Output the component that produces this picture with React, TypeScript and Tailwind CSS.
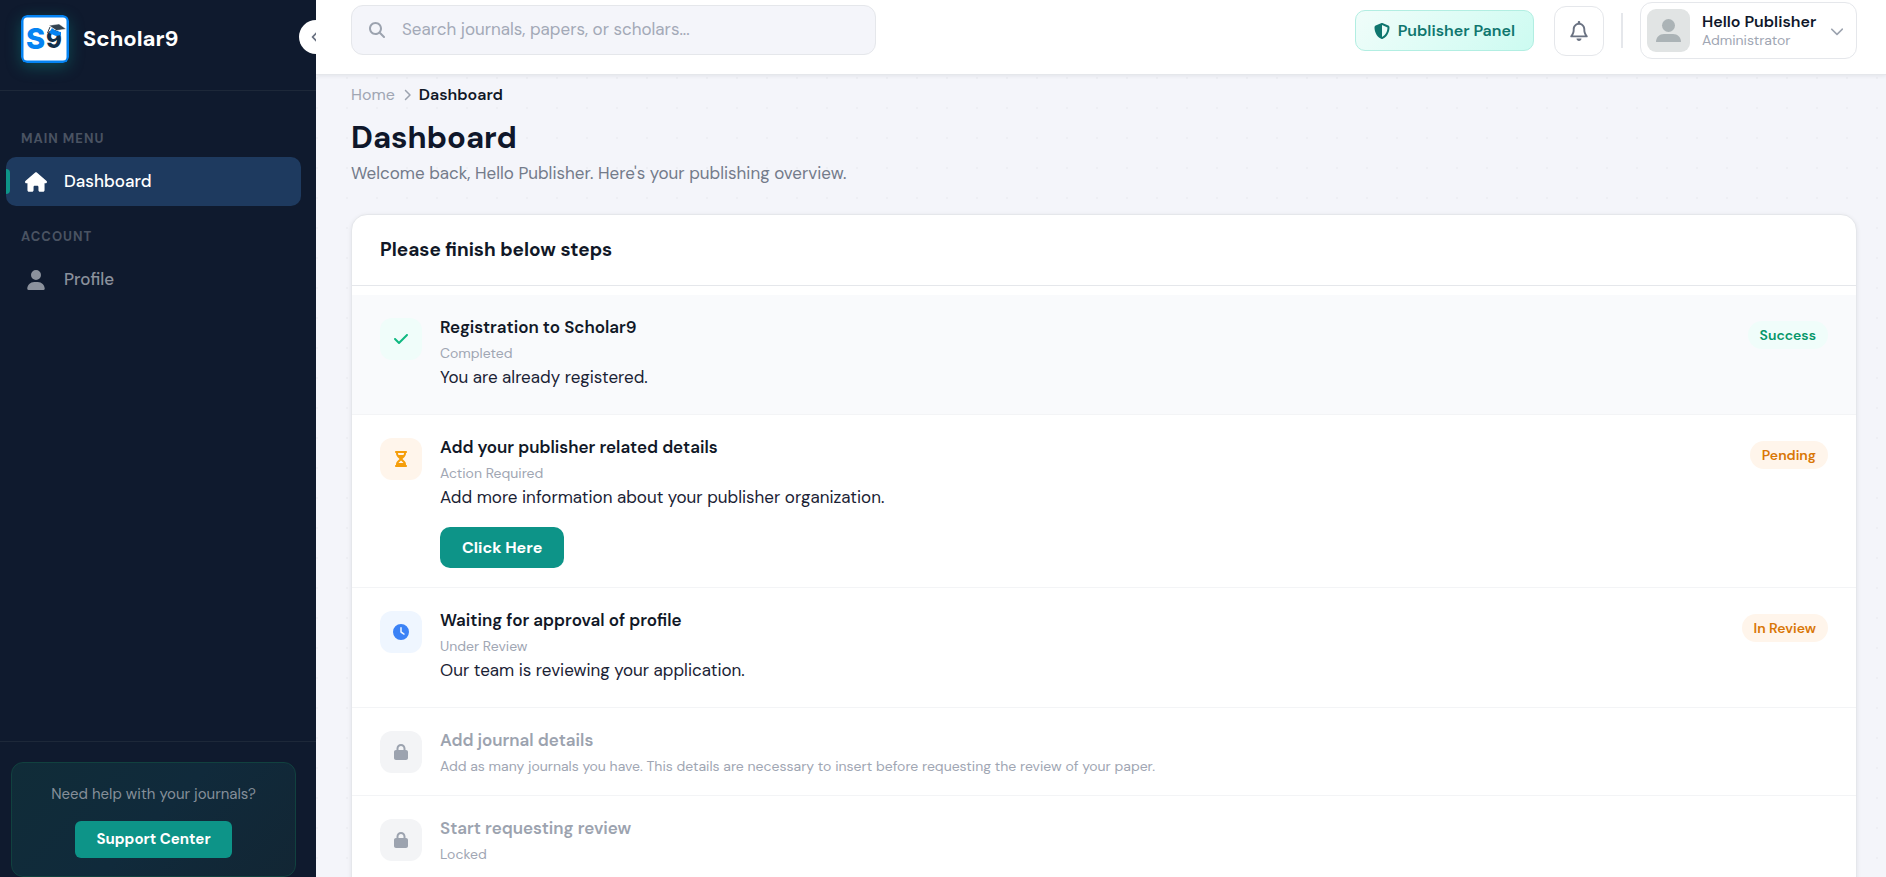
import type { ComponentType, ReactNode } from 'react';
import {
  FaCheck,
  FaChevronDown,
  FaChevronLeft,
  FaChevronRight,
  FaClock,
  FaHourglassHalf,
  FaHouse,
  FaLock,
  FaMagnifyingGlass,
  FaRegBell,
  FaShieldHalved,
  FaUser,
} from 'react-icons/fa6';

type IconType = ComponentType<{ className?: string }>;

function Logo() {
  return (
    <svg
      className="w-12 h-12 shrink-0 rounded-md shadow-[0_4px_15px_rgba(13,148,136,0.4)]"
      viewBox="0 0 48 48"
      aria-hidden="true"
    >
      <rect width="48" height="48" rx="6" fill="#0583f2" />
      <rect x="2.5" y="2.5" width="43" height="43" rx="3.5" fill="#fff" />
      <text
        x="5"
        y="34"
        fontFamily="Inter, sans-serif"
        fontSize="29"
        fontWeight="800"
        fill="#0583f2"
      >
        S
      </text>
      <text
        x="25"
        y="33"
        fontFamily="Inter, sans-serif"
        fontSize="24"
        fontWeight="800"
        fill="#12304a"
      >
        9
      </text>
      <path d="M31 13l4 3 5 1v3l-5 1-7-3z" fill="#0583f2" />
      <path d="M28 10.5l10-1.5 7 5-9.5 1.5z" fill="#33424f" stroke="#fff" strokeWidth=".4" />
      <path d="M29 12l-2.5 6" stroke="#33424f" strokeWidth="1" />
    </svg>
  );
}

function NavLabel({ children }: { children: ReactNode }) {
  return (
    <h2 className="px-[21px] text-[13px] leading-5 font-bold uppercase tracking-[1px] text-[#4a5362]">
      {children}
    </h2>
  );
}

interface NavItemProps {
  icon: IconType;
  label: string;
  active?: boolean;
}

function NavItem({ icon: Icon, label, active = false }: NavItemProps) {
  return (
    <a
      href="#"
      aria-current={active ? 'page' : undefined}
      className={`relative ml-1.5 mr-[15px] h-[49px] px-[18px] flex items-center gap-4 rounded-[10px] overflow-hidden text-[17px] font-medium ${
        active ? 'bg-[#1e3a5f] text-white' : 'text-[#8b919c]'
      }`}
    >
      {active && <span className="absolute left-0 top-3 bottom-3 w-1 rounded-r bg-[#0d9488]" />}
      <span className="w-6 flex justify-center">
        <Icon className={active ? 'size-[22px]' : 'size-5'} />
      </span>
      {label}
    </a>
  );
}

function Sidebar() {
  return (
    <aside className="relative w-[316px] shrink-0 h-screen flex flex-col overflow-hidden bg-[#0f1a2e]">
      <div className="h-[91px] pt-[15px] px-[21px] flex items-start gap-3.5 border-b border-[#1d2839]">
        <Logo />
        <span className="leading-[47px] text-[22px] font-bold text-white">Scholar9</span>
      </div>
      <button
        type="button"
        aria-label="Collapse sidebar"
        className="absolute -right-[17px] top-5 size-[34px] rounded-full bg-white text-gray-500 flex items-center justify-center"
      >
        <FaChevronLeft className="size-3.5" />
      </button>
      <nav className="flex-1 pt-[38px]">
        <NavLabel>Main Menu</NavLabel>
        <div className="mt-2 mb-[21px]">
          <NavItem icon={FaHouse} label="Dashboard" active />
        </div>
        <NavLabel>Account</NavLabel>
        <div className="mt-2">
          <NavItem icon={FaUser} label="Profile" />
        </div>
      </nav>
      <div className="border-t border-[#1d2839] pt-5 pl-[11px] pr-5">
        <div className="rounded-xl border border-[#11413f] bg-linear-135 from-[#102c38] via-[#102a3b] to-[#122634] px-4 pt-[19px] pb-[18px] text-center">
          <p className="text-[15px] leading-6 text-[#858f99]">Need help with your journals?</p>
          <a
            href="#"
            className="mt-[15px] inline-block rounded-md bg-[#0d9488] px-[21px] leading-[37px] text-[15px] font-bold text-white"
          >
            Support Center
          </a>
        </div>
      </div>
    </aside>
  );
}

function Header() {
  return (
    <header className="relative h-[75px] pt-0.5 pl-[35px] pr-[29px] flex items-start justify-between bg-white border-b border-gray-200 shadow-[0_1px_4px_rgba(15,23,42,0.08)]">
      <label className="mt-[3px] w-[525px] h-[50px] px-[17px] flex items-center gap-[17px] rounded-xl border border-gray-200 bg-[#f4f5fa]">
        <span className="sr-only">Search</span>
        <FaMagnifyingGlass className="size-4 shrink-0 text-[#9ca3af]" />
        <input
          type="search"
          placeholder="Search journals, papers, or scholars..."
          className="flex-1 min-w-0 bg-transparent outline-none text-[17px] placeholder:text-[#a3a9b7]"
        />
      </label>
      <div className="h-[57px] flex items-center">
        <button
          type="button"
          className="h-[41px] px-[18px] mr-5 flex items-center gap-2 rounded-[10px] border border-[#b2eee2] bg-linear-135 from-[#f0fdfa] to-[#ccfbf1] text-base font-semibold text-[#0f766e]"
        >
          <FaShieldHalved className="size-4" />
          Publisher Panel
        </button>
        <button
          type="button"
          aria-label="Notifications"
          className="size-[50px] flex items-center justify-center rounded-xl border border-gray-200 text-gray-500"
        >
          <FaRegBell className="size-5" />
        </button>
        <span className="mx-[17px] w-0.5 h-[35px] bg-gray-200" />
        <button
          type="button"
          className="w-[217px] h-[57px] pl-1.5 pr-3 flex items-center gap-3 rounded-xl border border-gray-200 text-left"
        >
          <svg className="size-[43px] shrink-0 rounded-[9px]" viewBox="0 0 43 43" aria-hidden="true">
            <rect width="43" height="43" fill="#e1e4e4" />
            <circle cx="21.5" cy="16.5" r="6.5" fill="#abb3b6" />
            <path d="M9 33c0-5 3.5-8 8-8h9c4.5 0 8 3 8 8z" fill="#abb3b6" />
          </svg>
          <span className="flex-1 pb-0.5">
            <span className="block text-base leading-5 font-semibold text-[#0f172a] whitespace-nowrap">
              Hello Publisher
            </span>
            <span className="block text-sm leading-4 text-[#a0a6b3]">Administrator</span>
          </span>
          <FaChevronDown className="size-3.5 shrink-0 text-[#9ca3af]" />
        </button>
      </div>
    </header>
  );
}

type Tone = 'done' | 'pending' | 'review' | 'locked';

interface Step {
  title: string;
  note: string;
  body?: string;
  badge?: string;
  action?: string;
  tone: Tone;
}

const STEPS: Step[] = [
  {
    title: 'Registration to Scholar9',
    note: 'Completed',
    body: 'You are already registered.',
    badge: 'Success',
    tone: 'done',
  },
  {
    title: 'Add your publisher related details',
    note: 'Action Required',
    body: 'Add more information about your publisher organization.',
    badge: 'Pending',
    action: 'Click Here',
    tone: 'pending',
  },
  {
    title: 'Waiting for approval of profile',
    note: 'Under Review',
    body: 'Our team is reviewing your application.',
    badge: 'In Review',
    tone: 'review',
  },
  {
    title: 'Add journal details',
    note: 'Add as many journals you have. This details are necessary to insert before requesting the review of your paper.',
    tone: 'locked',
  },
  { title: 'Start requesting review', note: 'Locked', tone: 'locked' },
];

const TONES: Record<Tone, { icon: IconType; tile: string; badge: string }> = {
  done: {
    icon: FaCheck,
    tile: 'bg-[#f0fdfa] text-[#10b981]',
    badge: 'bg-[#f0fdfa] text-[#059669]',
  },
  pending: {
    icon: FaHourglassHalf,
    tile: 'bg-[#fff5eb] text-[#f59e0b]',
    badge: 'bg-[#fff5eb] text-[#d97706]',
  },
  review: {
    icon: FaClock,
    tile: 'bg-[#eff6ff] text-[#3b82f6]',
    badge: 'bg-[#fff5eb] text-[#d97706]',
  },
  locked: { icon: FaLock, tile: 'bg-[#f3f4f6] text-[#9ca3af]', badge: '' },
};

function StepRow({ step }: { step: Step }) {
  const { icon: Icon, tile, badge } = TONES[step.tone];
  const locked = step.tone === 'locked';

  return (
    <li
      className={`px-7 pt-5 pb-[19px] flex items-start border-b border-gray-100 ${
        step.tone === 'done' ? 'bg-[#f9fafc]' : ''
      }`}
    >
      <span
        className={`mt-[3px] mr-[18px] size-[42px] shrink-0 rounded-xl flex items-center justify-center ${tile}`}
      >
        <Icon className="size-4" />
      </span>
      <div className="flex-1 min-w-0">
        <h3
          className={`text-[17px] leading-6 font-semibold ${locked ? 'text-[#9ca3af]' : 'text-[#111827]'}`}
        >
          {step.title}
        </h3>
        <p className="mt-1 text-sm leading-5 text-[#a0a6b3]">{step.note}</p>
        {step.body && <p className="mb-1 text-[17px] leading-7 text-[#1a2234]">{step.body}</p>}
        {step.action && (
          <button
            type="button"
            className="mt-4 h-[41px] px-[22px] block rounded-[10px] bg-[#0d9488] text-base font-bold text-white"
          >
            {step.action}
          </button>
        )}
      </div>
      {step.badge && (
        <span className={`mt-1.5 px-3 rounded-full text-sm leading-7 font-semibold ${badge}`}>
          {step.badge}
        </span>
      )}
    </li>
  );
}

export default function App() {
  return (
    <div className="h-screen flex overflow-hidden font-['DM_Sans',Inter,sans-serif] text-[#111827]">
      <Sidebar />
      <div className="flex-1 min-w-0 h-screen overflow-hidden">
        <Header />
        <main className="min-h-screen pt-2 pl-[35px] pr-[29px] bg-[#f4f5fa] bg-[radial-gradient(circle_at_1px_1px,#eeeff4_1px,transparent_0)] bg-size-[30px_30px] bg-position-[0_2px]">
          <nav aria-label="Breadcrumb" className="flex items-center gap-1.5 text-base leading-6">
            <a href="#" className="text-[#a0a6b3]">
              Home
            </a>
            <FaChevronRight className="size-3 text-[#9ca3af]" />
            <span className="font-semibold">Dashboard</span>
          </nav>
          <h1 className="mt-[11px] text-[31px] leading-10 font-bold text-[#0f172a]">Dashboard</h1>
          <p className="mt-[3px] text-[17px] leading-6 text-[#737b8a]">
            Welcome back, Hello Publisher. Here's your publishing overview.
          </p>
          <section className="mt-[29px] rounded-2xl border border-gray-200 bg-white shadow-[0_1px_4px_rgba(15,23,42,0.08)] overflow-hidden">
            <h2 className="px-7 leading-[70px] text-[19px] font-bold border-b border-gray-200">
              Please finish below steps
            </h2>
            <ul className="pt-[9px] pb-4">
              {STEPS.map((step) => (
                <StepRow key={step.title} step={step} />
              ))}
            </ul>
          </section>
        </main>
      </div>
    </div>
  );
}
